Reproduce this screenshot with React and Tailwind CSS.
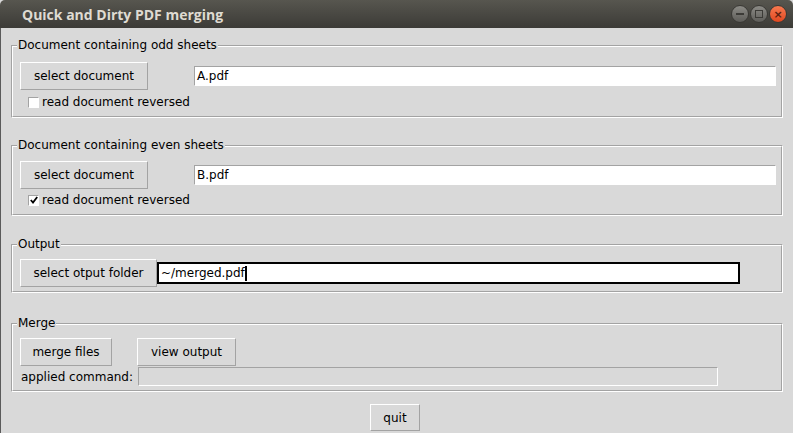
import React from "react";

function Groove({ label, className = "", children }) {
  return (
    <div className={"relative border border-t-[#a3a3a3] border-l-[#a3a3a3] border-b-white border-r-white " + className}>
      <div className="border border-t-white border-l-white border-b-[#a3a3a3] border-r-[#a3a3a3] h-full">
        {children}
      </div>
      <div className="absolute left-[5px] top-[-8px] bg-[#d9d9d9] px-[1px] leading-[15px] text-[12px] text-black">
        {label}
      </div>
    </div>
  );
}

function Btn({ children, className = "" }) {
  return (
    <div className={"flex items-center justify-center border border-t-white border-l-white border-b-[#a3a3a3] border-r-[#a3a3a3] bg-[#d9d9d9] text-[12px] text-black " + className}>
      {children}
    </div>
  );
}

function Entry({ children, className = "" }) {
  return (
    <div className={"flex items-center bg-white border border-t-[#a3a3a3] border-l-[#a3a3a3] border-b-white border-r-white text-[12px] text-black px-[2px] " + className}>
      {children}
    </div>
  );
}

function Check({ checked }) {
  return (
    <div className="w-[11px] h-[11px] bg-white border border-t-[#a3a3a3] border-l-[#a3a3a3] border-b-white border-r-white flex items-center justify-center">
      {checked && (
        <svg width="8" height="8" viewBox="0 0 8 8">
          <path d="M0.8 4 L3 6.5 L7.2 1" stroke="#000" strokeWidth="1.8" fill="none" />
        </svg>
      )}
    </div>
  );
}

export default function App() {
  return (
    <div
      className="w-[793px] h-[433px] bg-[#d9d9d9] flex flex-col overflow-hidden"
      style={{ fontFamily: '"DejaVu Sans", sans-serif' }}
    >
      {/* title bar */}
      <div className="h-[28px] shrink-0 flex items-center bg-gradient-to-b from-[#57564f] to-[#3c3b37] rounded-t-[5px]">
        <div className="pl-[22px] text-[14px] font-bold text-[#dfdbd2] flex-1" style={{ fontFamily: '"Open Sans", "DejaVu Sans", sans-serif' }}>
          Quick and Dirty PDF merging
        </div>
        <div className="flex items-center gap-[1px] pr-[6px]">
          <div className="w-[18px] h-[18px] rounded-full bg-gradient-to-b from-[#8c8b86] to-[#5e5d59] border border-[#3a3935] flex items-center justify-center">
            <div className="w-[8px] h-[2px] bg-[#3c3b37]" />
          </div>
          <div className="w-[18px] h-[18px] rounded-full bg-gradient-to-b from-[#8c8b86] to-[#5e5d59] border border-[#3a3935] flex items-center justify-center">
            <div className="w-[8px] h-[8px] border border-[#3c3b37]" />
          </div>
          <div className="w-[18px] h-[18px] rounded-full bg-gradient-to-b from-[#f7794f] to-[#e0461e] border border-[#3a3935] flex items-center justify-center text-[11px] leading-none font-bold text-[#5a2010]">
            ×
          </div>
        </div>
      </div>

      {/* body */}
      <div className="flex-1 flex flex-col border-l border-[#5a5a5a] pl-[10px] pr-[10px]">
        <Groove label="Document containing odd sheets" className="mt-[17px] h-[73px]">
          <div className="pl-[7px] pt-[15px] flex flex-col">
            <div className="flex items-center">
              <Btn className="w-[128px] h-[28px]">select document</Btn>
              <Entry className="ml-[46px] w-[582px] h-[20px]">A.pdf</Entry>
            </div>
            <div className="flex items-center mt-[5px] ml-[8px] gap-[3px] text-[12px] leading-[14px]">
              <Check checked={false} />
              <span>read document reversed</span>
            </div>
          </div>
        </Groove>

        <Groove label="Document containing even sheets" className="mt-[27px] h-[71px]">
          <div className="pl-[7px] pt-[14px] flex flex-col">
            <div className="flex items-center">
              <Btn className="w-[128px] h-[28px]">select document</Btn>
              <Entry className="ml-[46px] w-[582px] h-[20px]">B.pdf</Entry>
            </div>
            <div className="flex items-center mt-[4px] ml-[8px] gap-[3px] text-[12px] leading-[14px]">
              <Check checked={true} />
              <span>read document reversed</span>
            </div>
          </div>
        </Groove>

        <Groove label="Output" className="mt-[28px] h-[49px]">
          <div className="pl-[7px] pt-[13px] flex items-center">
            <Btn className="w-[137px] h-[28px]">select otput folder</Btn>
            <div className="ml-0 w-[583px] h-[22px] bg-white border-2 border-black flex items-center px-[2px] text-[12px] text-black">
              ~/merged.pdf
              <span className="inline-block w-[2px] h-[15px] bg-black" />
            </div>
          </div>
        </Groove>

        <Groove label="Merge" className="mt-[30px] h-[69px]">
          <div className="pl-[7px] pt-[13px] flex flex-col">
            <div className="flex items-center">
              <Btn className="w-[92px] h-[28px]">merge files</Btn>
              <Btn className="ml-[25px] w-[99px] h-[28px]">view output</Btn>
            </div>
            <div className="flex items-center mt-[1px]">
              <span className="text-[12px] text-black ml-[1px] w-[117px]">applied command:</span>
              <div className="w-[580px] h-[19px] bg-[#d9d9d9] border border-t-[#a3a3a3] border-l-[#a3a3a3] border-b-white border-r-white" />
            </div>
          </div>
        </Groove>

        <div className="flex justify-center mt-[12px]">
          <Btn className="ml-[-4px] w-[50px] h-[27px]">quit</Btn>
        </div>
      </div>
    </div>
  );
}
